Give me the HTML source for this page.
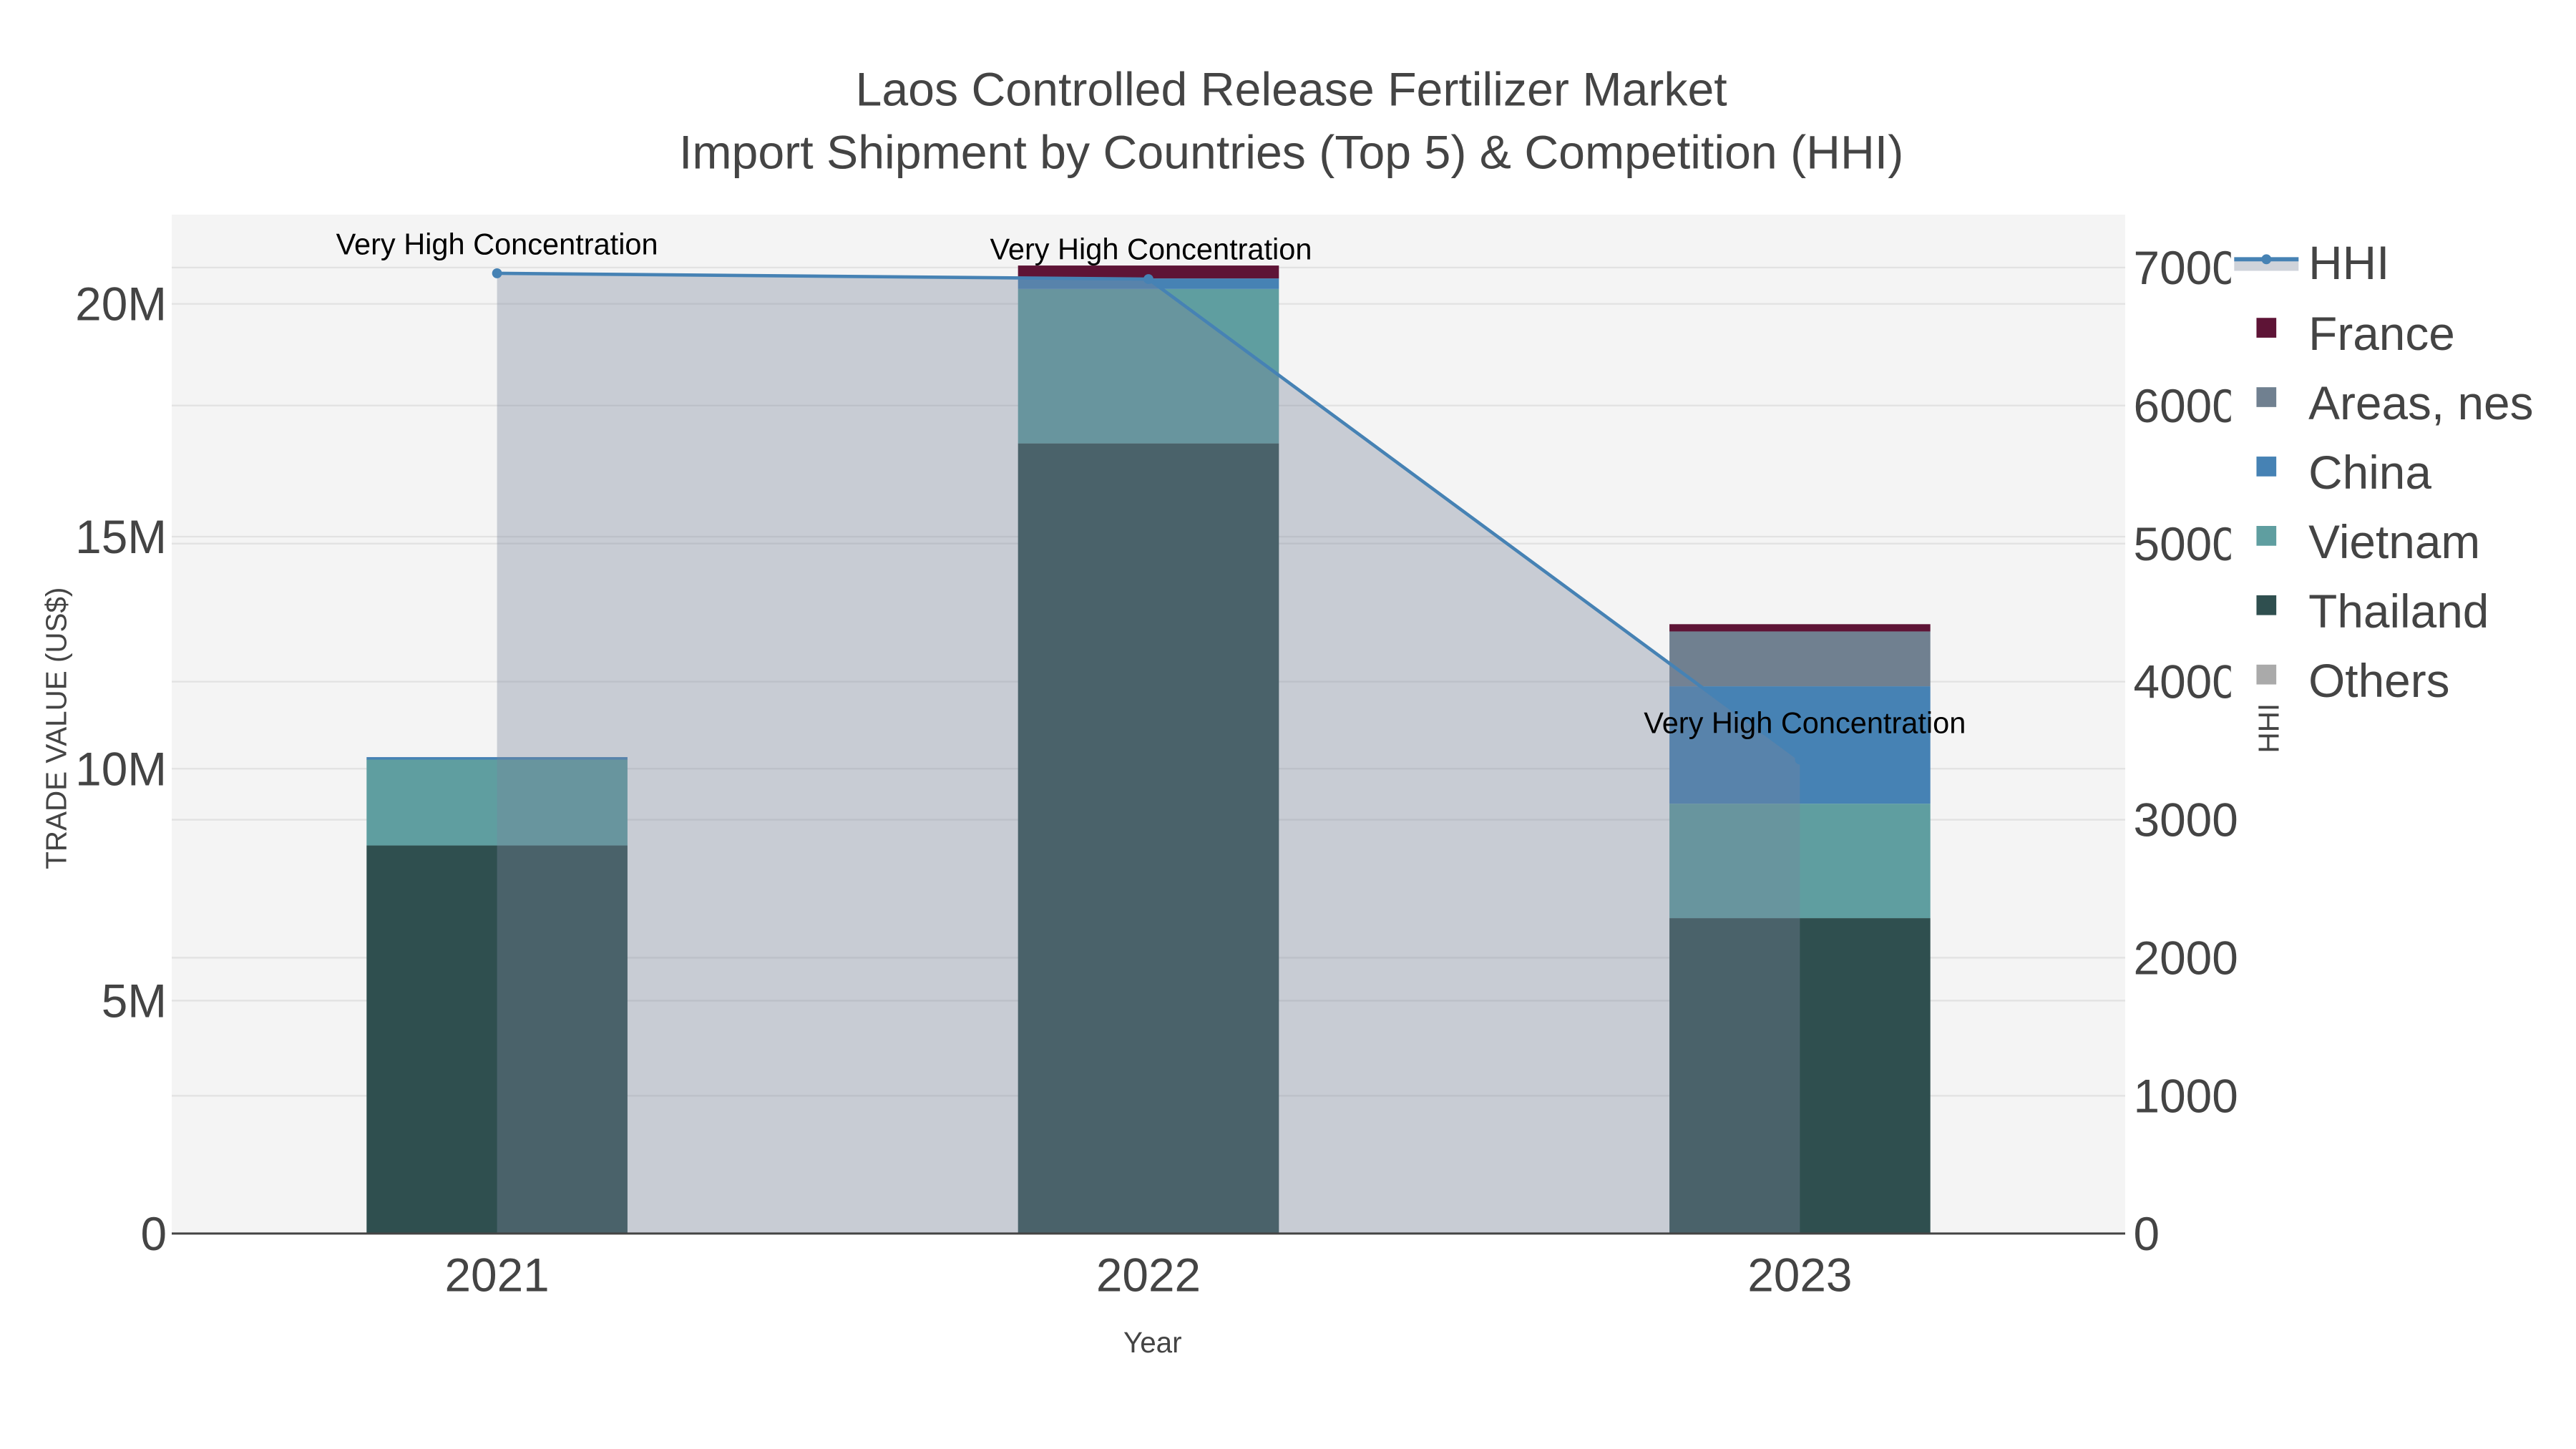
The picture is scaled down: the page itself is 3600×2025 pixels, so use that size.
<!DOCTYPE html>
<html><head><meta charset="utf-8"><style>
html,body{margin:0;padding:0;background:#fff;}
svg{display:block;}
text{font-family:"Liberation Sans",sans-serif;}
</style></head><body>
<svg width="3600" height="2025" viewBox="0 0 1560 877.5" xmlns="http://www.w3.org/2000/svg">
<rect x="0" y="0" width="1560" height="877.5" fill="#fff"/>
<rect x="104" y="130" width="1183" height="617" fill="#f4f4f4"/>
<g stroke="#e2e2e2" stroke-width="1">
<line x1="104" x2="1287" y1="184" y2="184"/>
<line x1="104" x2="1287" y1="325" y2="325"/>
<line x1="104" x2="1287" y1="465.5" y2="465.5"/>
<line x1="104" x2="1287" y1="606" y2="606"/>
<line x1="104" x2="1287" y1="162" y2="162"/>
<line x1="104" x2="1287" y1="245.6" y2="245.6"/>
<line x1="104" x2="1287" y1="329.2" y2="329.2"/>
<line x1="104" x2="1287" y1="412.8" y2="412.8"/>
<line x1="104" x2="1287" y1="496.4" y2="496.4"/>
<line x1="104" x2="1287" y1="580" y2="580"/>
<line x1="104" x2="1287" y1="663.6" y2="663.6"/>
</g>
<rect x="222" y="512" width="158" height="235" fill="#2f4f4f"/>
<rect x="222" y="459.7" width="158" height="52.3" fill="#5f9ea0"/>
<rect x="222" y="458.5" width="158" height="1.5" fill="#4682b4"/>
<rect x="616.5" y="268.5" width="158" height="478.5" fill="#2f4f4f"/>
<rect x="616.5" y="175" width="158" height="93.5" fill="#5f9ea0"/>
<rect x="616.5" y="168.6" width="158" height="6.4" fill="#4682b4"/>
<rect x="616.5" y="160.8" width="158" height="7.8" fill="#5e1436"/>
<rect x="1011" y="556" width="158" height="191" fill="#2f4f4f"/>
<rect x="1011" y="486.7" width="158" height="69.3" fill="#5f9ea0"/>
<rect x="1011" y="415.6" width="158" height="71.1" fill="#4682b4"/>
<rect x="1011" y="382.4" width="158" height="33.2" fill="#708090"/>
<rect x="1011" y="378" width="158" height="4.4" fill="#5e1436"/>
<polygon points="301,165.5 695.5,169 1090,460 1090,747 301,747" fill="rgb(122,133,155)" fill-opacity="0.36"/>
<polyline points="301,165.5 695.5,169 1090,460" fill="none" stroke="#4682b4" stroke-width="2"/>
<circle cx="301" cy="165.5" r="3" fill="#4682b4"/>
<circle cx="695.5" cy="169" r="3" fill="#4682b4"/>
<circle cx="1090" cy="460" r="3" fill="#4682b4"/>
<line x1="104" x2="1287" y1="747" y2="747" stroke="#444" stroke-width="1.3"/>
<g font-size="18" fill="#000" text-anchor="middle">
<text x="301" y="154">Very High Concentration</text>
<text x="697" y="157">Very High Concentration</text>
<text x="1093" y="444">Very High Concentration</text>
</g>
<g fill="#444" text-anchor="middle" font-size="28.7">
<text x="782" y="64">Laos Controlled Release Fertilizer Market</text>
<text x="782" y="102">Import Shipment by Countries (Top 5) &amp; Competition (HHI)</text>
</g>
<g fill="#444" text-anchor="end" font-size="28.5">
<text x="101" y="194">20M</text>
<text x="101" y="335">15M</text>
<text x="101" y="475.5">10M</text>
<text x="101" y="616">5M</text>
<text x="101" y="757">0</text>
</g>
<g fill="#444" font-size="28.5">
<text x="1292" y="172">7000</text>
<text x="1292" y="255.6">6000</text>
<text x="1292" y="339.2">5000</text>
<text x="1292" y="422.8">4000</text>
<text x="1292" y="506.4">3000</text>
<text x="1292" y="590">2000</text>
<text x="1292" y="673.6">1000</text>
<text x="1292" y="757">0</text>
</g>
<g transform="translate(-6,0)">
<rect x="1357" y="140" width="209" height="295" fill="#fff"/>
<rect x="1359" y="158" width="39" height="6" fill="#cfd3da"/>
<line x1="1359" x2="1398" y1="157" y2="157" stroke="#4682b4" stroke-width="2.5"/>
<circle cx="1378.5" cy="157" r="3" fill="#4682b4"/>
<rect x="1372.5" y="192.5" width="12" height="12" fill="#5e1436"/>
<rect x="1372.5" y="234.5" width="12" height="12" fill="#708090"/>
<rect x="1372.5" y="276.5" width="12" height="12" fill="#4682b4"/>
<rect x="1372.5" y="318.5" width="12" height="12" fill="#5f9ea0"/>
<rect x="1372.5" y="360.5" width="12" height="12" fill="#2f4f4f"/>
<rect x="1372.5" y="402.5" width="12" height="12" fill="#aaaaaa"/>
<g fill="#444" font-size="28.5">
<text x="1404" y="169">HHI</text>
<text x="1404" y="212">France</text>
<text x="1404" y="254">Areas, nes</text>
<text x="1404" y="296">China</text>
<text x="1404" y="338">Vietnam</text>
<text x="1404" y="380">Thailand</text>
<text x="1404" y="422">Others</text>
</g>
</g>
<g fill="#444" text-anchor="middle" font-size="28.5">
<text x="301" y="782">2021</text>
<text x="695.5" y="782">2022</text>
<text x="1090" y="782">2023</text>
</g>
<text x="698" y="819" fill="#444" font-size="17.5" text-anchor="middle">Year</text>
<text transform="translate(40,441) rotate(-90)" fill="#444" font-size="17.5" text-anchor="middle">TRADE VALUE (US$)</text>
<text transform="translate(1380,441) rotate(-90)" fill="#444" font-size="17.5" text-anchor="middle">HHI</text>
</svg>
</body></html>
